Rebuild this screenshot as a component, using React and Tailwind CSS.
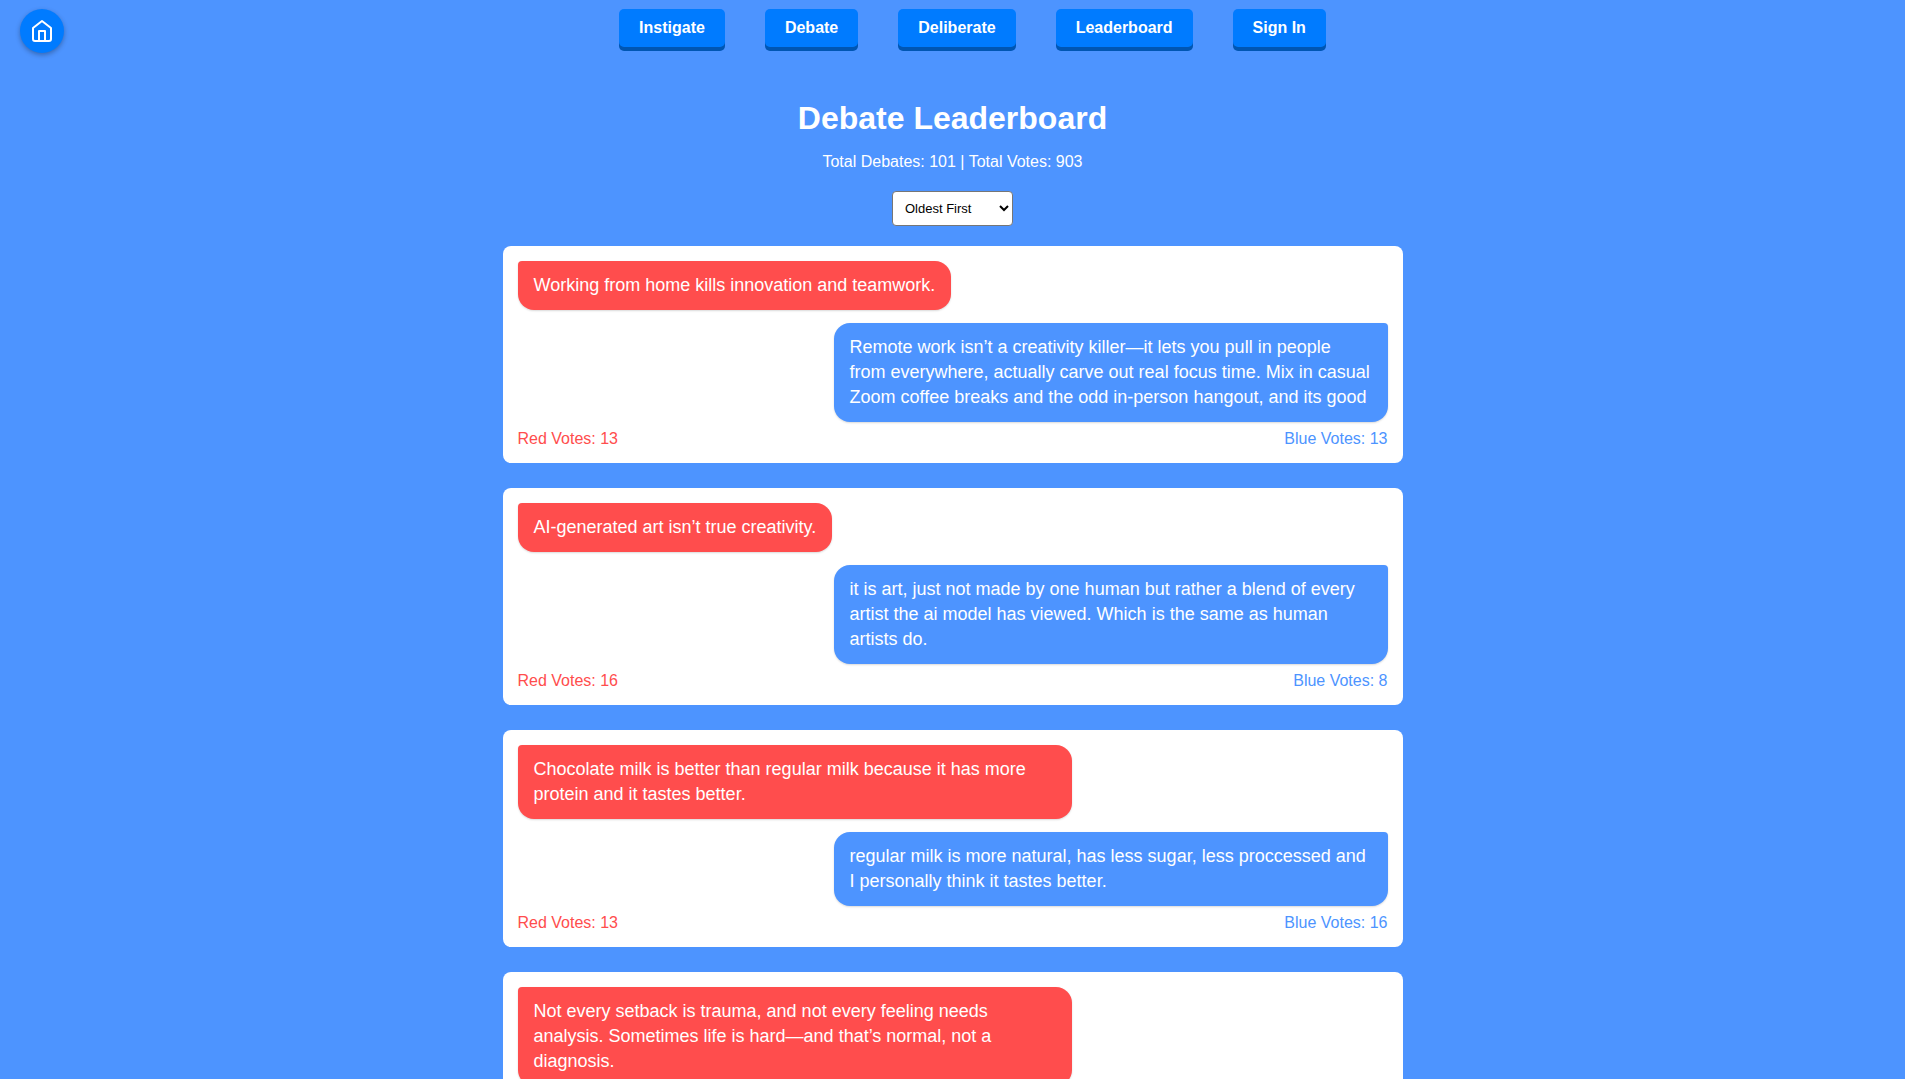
const NAV_ITEMS = ["Instigate", "Debate", "Deliberate", "Leaderboard", "Sign In"];

const DEBATES = [
  {
    red: "Working from home kills innovation and teamwork.",
    blue: "Remote work isn’t a creativity killer—it lets you pull in people from everywhere, actually carve out real focus time. Mix in casual Zoom coffee breaks and the odd in-person hangout, and its good",
    redVotes: 13,
    blueVotes: 13,
  },
  {
    red: "AI-generated art isn’t true creativity.",
    blue: "it is art, just not made by one human but rather a blend of every artist the ai model has viewed. Which is the same as human artists do.",
    redVotes: 16,
    blueVotes: 8,
  },
  {
    red: "Chocolate milk is better than regular milk because it has more protein and it tastes better.",
    blue: "regular milk is more natural, has less sugar, less proccessed and I personally think it tastes better.",
    redVotes: 13,
    blueVotes: 16,
  },
  {
    red: "Not every setback is trauma, and not every feeling needs analysis. Sometimes life is hard—and that’s normal, not a diagnosis.",
  },
];

function HomeLink() {
  return (
    <a
      href="#home"
      aria-label="Home"
      className="absolute left-5 top-[9px] flex size-11 items-center justify-center rounded-full bg-[#007bff] text-white shadow-[0_2px_5px_rgba(0,0,0,0.3)]"
    >
      <svg
        width="24"
        height="24"
        viewBox="0 0 24 24"
        fill="none"
        stroke="currentColor"
        strokeWidth="2"
        strokeLinecap="round"
        strokeLinejoin="round"
        aria-hidden="true"
      >
        <path d="M3 9l9-7 9 7v11a2 2 0 0 1-2 2H5a2 2 0 0 1-2-2z" />
        <polyline points="9 22 9 12 15 12 15 22" />
      </svg>
    </a>
  );
}

function NavBar() {
  return (
    <nav className="flex flex-wrap justify-center gap-10 pl-10 pt-[9px]">
      {NAV_ITEMS.map((label) => (
        <a
          key={label}
          href={"#" + label.toLowerCase().replace(" ", "-")}
          className="rounded-[5px] bg-[#007bff] px-5 py-2.5 text-base leading-[18px] font-bold text-white shadow-[0_4px_0_#0056b3]"
        >
          {label}
        </a>
      ))}
    </nav>
  );
}

function DebateCard({ debate }) {
  return (
    <article className="flex flex-col rounded-lg bg-white p-[15px]">
      <p className="box-content max-w-3/5 self-start rounded-2xl rounded-tl-[4px] bg-[#ff4d4d] px-4 py-3 text-lg leading-[25px] text-white shadow-[0_1px_2px_rgba(0,0,0,0.15)]">
        {debate.red}
      </p>
      {debate.blue && (
        <>
          <p className="mt-[13px] box-content max-w-3/5 self-end rounded-2xl rounded-tr-[4px] bg-[#4d94ff] px-4 py-3 text-lg leading-[25px] text-white shadow-[0_1px_2px_rgba(0,0,0,0.15)]">
            {debate.blue}
          </p>
          <div className="mt-[7px] flex justify-between text-base leading-[19px]">
            <span className="text-[#ff4d4d]">Red Votes: {debate.redVotes}</span>
            <span className="text-[#4d94ff]">Blue Votes: {debate.blueVotes}</span>
          </div>
        </>
      )}
    </article>
  );
}

export default function App() {
  return (
    <div className="relative min-h-screen bg-[#4d94ff] font-['Liberation_Sans',Arial,sans-serif]">
      <HomeLink />
      <NavBar />
      <main className="mx-auto flex max-w-[900px] flex-col pt-[53px]">
        <header className="flex flex-col items-center text-white">
          <h1 className="text-[32px] leading-9 font-bold">Debate Leaderboard</h1>
          <p className="mt-[17px] text-base leading-[18px]">Total Debates: 101 | Total Votes: 903</p>
          <select
            aria-label="Sort debates"
            defaultValue="oldest"
            className="mt-5 h-[35px] w-[121px] rounded-[4px] border border-[#767676] bg-white px-2 text-[13px] text-black"
          >
            <option value="oldest">Oldest First</option>
          </select>
        </header>
        <section className="mt-5 flex flex-col gap-[25px]">
          {DEBATES.map((debate) => (
            <DebateCard key={debate.red} debate={debate} />
          ))}
        </section>
      </main>
    </div>
  );
}
